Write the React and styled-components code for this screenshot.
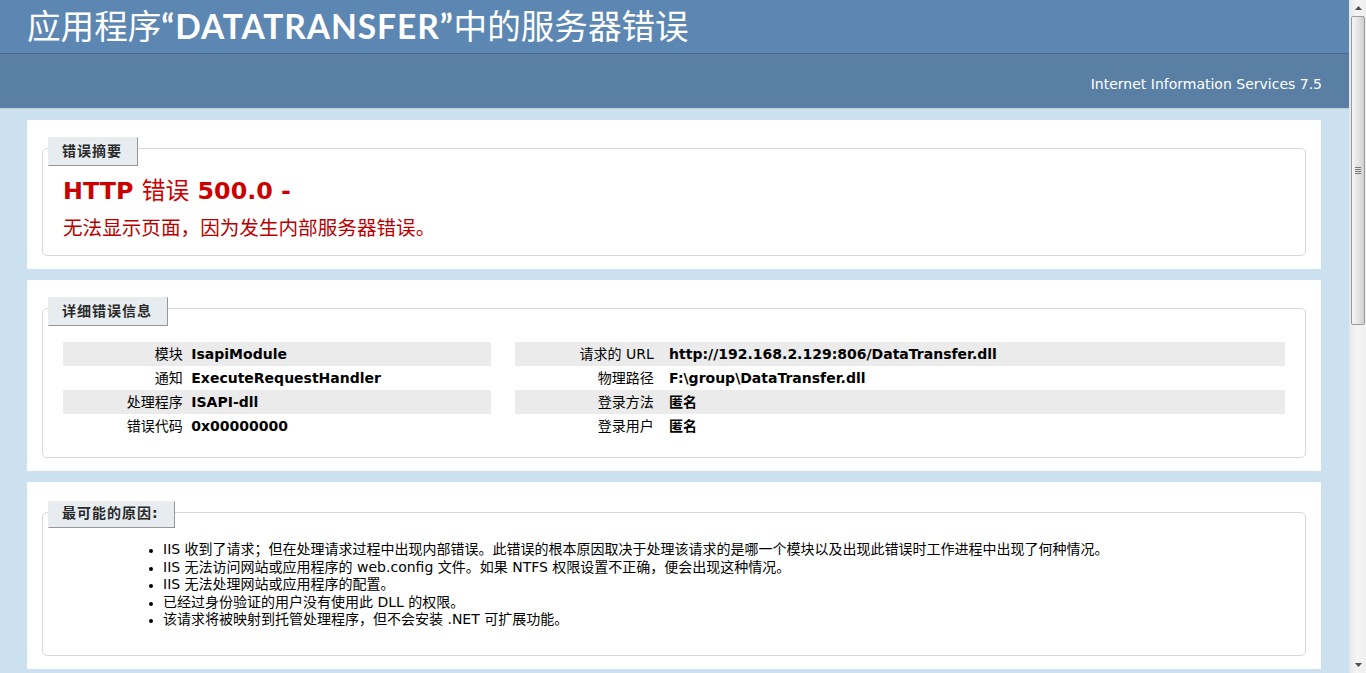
import React from 'react';
import styled, { createGlobalStyle } from 'styled-components';

const GlobalStyle = createGlobalStyle`
  html, body {
    margin: 0;
    padding: 0;
    overflow: hidden;
  }
  body {
    background: #cbe1ef;
    font-family: "DejaVu Sans", Verdana, "Noto Sans CJK SC", sans-serif;
    font-size: 14px;
    color: #000;
  }
`;

const Page = styled.div`
  width: 1349px;
  min-height: 673px;
  background: #cbe1ef;
`;

const Header = styled.div`
  height: 53px;
  padding: 0 27px;
  box-sizing: border-box;
  display: flex;
  align-items: center;
  background: #5c87b2;
`;

const Title = styled.h1`
  margin: 0;
  font-family: Lato, "Noto Sans CJK SC", sans-serif;
  font-size: 33.6px;
  line-height: 41px;
  font-weight: 400;
  color: #fff;
  white-space: nowrap;

  b {
    font-weight: 700;
    letter-spacing: 0.9px;
  }
`;

const ServerVersion = styled.div`
  padding: 22px 27px 15px;
  line-height: 17px;
  background: #5a7fa5;
  border-top: 1px solid #4a6c8e;
  border-bottom: 1px solid #c1cfdd;
  color: #fff;
  text-align: right;
`;

const Content = styled.div`
  display: flex;
  flex-direction: column;
  gap: 11px;
  padding: 11px 0 0 27px;
`;

const Container = styled.div`
  width: 1294px;
  box-sizing: border-box;
  padding: ${(p) => (p.$compact ? '30px' : '28px')} 15px 13px;
  background: #fff;
`;

const Fieldset = styled.div`
  border: 1px solid #d9d9d9;
  border-radius: 5px;
  padding: 0 20px ${(p) => p.$bottom}px;
`;

const Legend = styled.div`
  display: block;
  width: fit-content;
  margin: -12px 0 0 -15px;
  padding: ${(p) => (p.$compact ? '2px' : '4px')} 15px 4px 13px;
  line-height: 19px;
  background: #e7ecf0;
  border-top: 1px solid #ededed;
  border-left: 1px solid #ededed;
  border-right: 1px solid #969696;
  border-bottom: 1px solid #969696;
  color: #2a2a2a;
  font-weight: 700;
  letter-spacing: 1px;
`;

const ErrorCode = styled.h2`
  margin: 10px 0 0;
  font-size: 23.8px;
  line-height: 30px;
  font-weight: 700;
  color: #c00;
`;

const Plain = styled.span`
  font-weight: 400;
`;

const ErrorText = styled.h3`
  margin: 10px 0 0;
  font-size: 19.6px;
  line-height: 26px;
  font-weight: 400;
  color: #b80000;
`;

const Details = styled.div`
  display: flex;
  margin-top: 16px;
`;

const Column = styled.div`
  width: ${(p) => p.$width};
  margin-right: ${(p) => p.$gap || 0};
`;

const Row = styled.div`
  display: flex;
  height: 24px;
  line-height: 24px;
  background: ${(p) => (p.$alt ? '#ebebeb' : 'transparent')};
`;

const Label = styled.div`
  width: ${(p) => p.$width};
  box-sizing: border-box;
  padding-right: 2%;
  text-align: right;
  white-space: nowrap;
`;

const Value = styled.div`
  flex: 1;
  font-weight: 700;
  white-space: nowrap;
`;

const Causes = styled.ul`
  margin: 13px 0 0;
  padding-left: 100px;
  line-height: 17.5px;
  list-style: disc;

  li::marker {
    font-size: 12px;
  }
`;

const Scrollbar = styled.div`
  position: fixed;
  top: 0;
  right: 0;
  width: 17px;
  height: 100vh;
  display: flex;
  flex-direction: column;
  box-sizing: border-box;
  border-left: 1px solid #e6e6e6;
  background: linear-gradient(to right, #e8e8e8, #f4f4f4 40%, #f0f0f0);
`;

const Arrow = styled.div`
  height: 16px;
  display: flex;
  align-items: center;
  justify-content: center;
`;

const Track = styled.div`
  flex: 1;
  padding: 0 1px;
`;

const Thumb = styled.div`
  height: 309px;
  display: flex;
  align-items: center;
  justify-content: center;
  box-sizing: border-box;
  border: 1px solid #9a9a9a;
  border-radius: 2px;
  background: linear-gradient(to right, #f6f6f6, #e4e4e4 50%, #cfcfcf);
`;

const Grip = styled.div`
  width: 6px;
  height: 7px;
  background: repeating-linear-gradient(to bottom, #777 0 1px, transparent 1px 2px);
`;

const details = {
  left: [
    ['模块', 'IsapiModule'],
    ['通知', 'ExecuteRequestHandler'],
    ['处理程序', 'ISAPI-dll'],
    ['错误代码', '0x00000000'],
  ],
  right: [
    ['请求的 URL', 'http://192.168.2.129:806/DataTransfer.dll'],
    ['物理路径', 'F:\\group\\DataTransfer.dll'],
    ['登录方法', '匿名'],
    ['登录用户', '匿名'],
  ],
};

const causes = [
  'IIS 收到了请求；但在处理请求过程中出现内部错误。此错误的根本原因取决于处理该请求的是哪一个模块以及出现此错误时工作进程中出现了何种情况。',
  'IIS 无法访问网站或应用程序的 web.config 文件。如果 NTFS 权限设置不正确，便会出现这种情况。',
  'IIS 无法处理网站或应用程序的配置。',
  '已经过身份验证的用户没有使用此 DLL 的权限。',
  '该请求将被映射到托管处理程序，但不会安装 .NET 可扩展功能。',
];

const DetailTable = ({ rows, labelWidth }) => (
  <>
    {rows.map(([label, value], i) => (
      <Row key={label} $alt={i % 2 === 0}>
        <Label $width={labelWidth}>{label}</Label>
        <Value>{value}</Value>
      </Row>
    ))}
  </>
);

const App = () => (
  <Page>
    <GlobalStyle />
    <Header>
      <Title>
        应用程序<b>“DATATRANSFER”</b>中的服务器错误
      </Title>
    </Header>
    <ServerVersion>Internet Information Services 7.5</ServerVersion>

    <Content>
      <Container>
        <Fieldset $bottom={13}>
          <Legend>错误摘要</Legend>
          <ErrorCode>
            HTTP <Plain>错误</Plain> 500.0 -
          </ErrorCode>
          <ErrorText>无法显示页面，因为发生内部服务器错误。</ErrorText>
        </Fieldset>
      </Container>

      <Container>
        <Fieldset $bottom={19}>
          <Legend>详细错误信息</Legend>
          <Details>
            <Column $width="35%" $gap="2%">
              <DetailTable rows={details.left} labelWidth="30%" />
            </Column>
            <Column $width="63%">
              <DetailTable rows={details.right} labelWidth="20%" />
            </Column>
          </Details>
        </Fieldset>
      </Container>

      <Container $compact>
        <Fieldset $bottom={26}>
          <Legend $compact>最可能的原因:</Legend>
          <Causes>
            {causes.map((c) => (
              <li key={c}>{c}</li>
            ))}
          </Causes>
        </Fieldset>
      </Container>
    </Content>

    <Scrollbar>
      <Arrow>
        <svg width="7" height="4" viewBox="0 0 7 4">
          <path d="M0 4 L3.5 0 L7 4 Z" fill="#4d4d4d" />
        </svg>
      </Arrow>
      <Track>
        <Thumb>
          <Grip />
        </Thumb>
      </Track>
      <Arrow>
        <svg width="7" height="4" viewBox="0 0 7 4">
          <path d="M0 0 L3.5 4 L7 0 Z" fill="#4d4d4d" />
        </svg>
      </Arrow>
    </Scrollbar>
  </Page>
);

export default App;
